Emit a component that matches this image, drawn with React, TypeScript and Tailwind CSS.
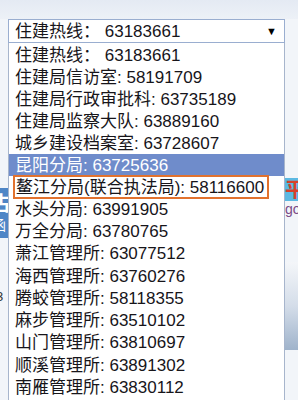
import React from "react";

const items: { name: string; num: string; full?: boolean }[] = [
  { name: "住建热线", num: "63183661", full: true },
  { name: "住建局信访室", num: "58191709" },
  { name: "住建局行政审批科", num: "63735189" },
  { name: "住建局监察大队", num: "63889160" },
  { name: "城乡建设档案室", num: "63728607" },
  { name: "昆阳分局", num: "63725636" },
  { name: "鳌江分局(联合执法局)", num: "58116600" },
  { name: "水头分局", num: "63991905" },
  { name: "万全分局", num: "63780765" },
  { name: "萧江管理所", num: "63077512" },
  { name: "海西管理所", num: "63760276" },
  { name: "腾蛟管理所", num: "58118355" },
  { name: "麻步管理所", num: "63510102" },
  { name: "山门管理所", num: "63810697" },
  { name: "顺溪管理所", num: "63891302" },
  { name: "南雁管理所", num: "63830112" },
];

const font = { fontFamily: '"Liberation Sans", "Noto Sans CJK SC", sans-serif' };

export default function App() {
  return (
    <div
      className="relative w-[298px] h-[400px] overflow-hidden bg-[#f2f5f9] text-[17px] leading-none text-[#17151a]"
      style={font}
    >
      {/* background page fragments */}
      <div className="absolute left-0 top-0 w-[298px] h-[19px] bg-gradient-to-b from-[#e4eaf3] to-[#edf1f7]" />
      <div className="absolute left-0 top-[188px] w-[8px] h-[50px] bg-[#4f86c6] overflow-hidden">
        <span className="absolute left-[-9px] top-[6px] text-[20px] font-bold text-white">古</span>
        <span className="absolute left-[-8px] top-[30px] text-[14px] text-white">函</span>
      </div>
      <span className="absolute left-[-4px] top-[290px] text-[13px] text-[#333]">3</span>
      <div className="absolute left-[284px] top-[178px] w-[14px] h-[23px] bg-[#5cb9e2] overflow-hidden">
        <span className="absolute left-[1px] top-[2px] text-[20px] font-bold text-[#d8402a]">平</span>
      </div>
      <span className="absolute left-[285px] top-[202px] text-[14px] text-[#7a4a86]">go</span>
      <div className="absolute left-[284px] top-[262px] w-[14px] h-[88px] bg-gradient-to-b from-[#f4f6f9] via-[#d4dde9] to-[#9fb3cb]" />

      <div className="relative pt-[19px] pl-[8px]">
        {/* select box */}
        <div className="w-[277px] h-[24px] border border-[#9aaed0] bg-white flex items-center justify-between pl-[6px] pr-[7px]">
          <span>住建热线： 63183661</span>
          <span className="text-[11px] text-black">▼</span>
        </div>
        {/* list */}
        <div className="w-[277px] h-[360px] border-x border-[#a7b5cc] bg-white pt-[1px] flex flex-col">
          {items.map((it, i) => {
            const label = it.full ? `${it.name}： ${it.num}` : `${it.name}: ${it.num}`;
            if (i === 5) {
              return (
                <div key={i} className="h-[22px] flex items-center pl-[6px] bg-[#6f8ccb] text-white">
                  {label}
                </div>
              );
            }
            if (i === 6) {
              return (
                <div key={i} className="h-[22px] flex items-center pl-[4px]">
                  <span className="h-[24px] flex items-center border-2 border-[#e2722e] pl-[1px] pr-[3px]">
                    {label}
                  </span>
                </div>
              );
            }
            return (
              <div key={i} className={`flex items-center pl-[6px] ${i > 6 ? "h-[22.3px]" : "h-[22px]"}`}>
                {label}
              </div>
            );
          })}
        </div>
      </div>
    </div>
  );
}
